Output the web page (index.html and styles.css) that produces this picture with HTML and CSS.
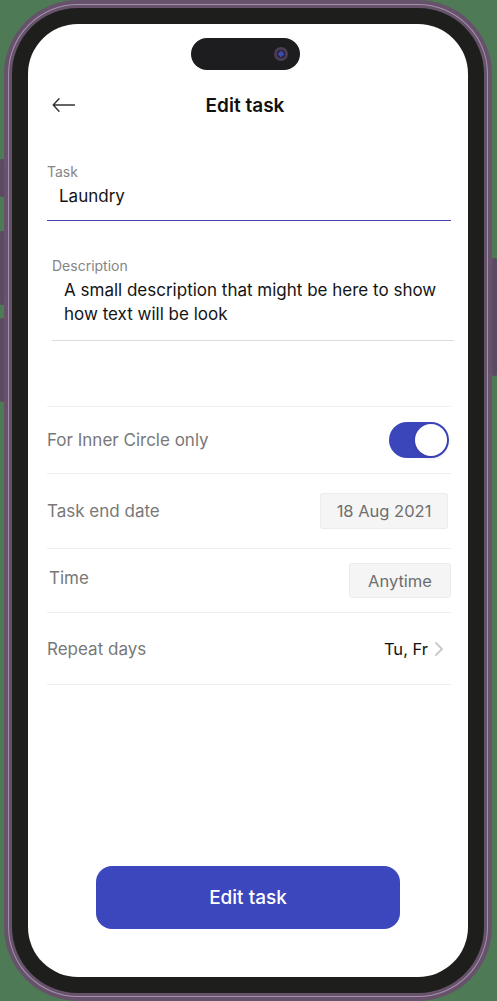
FILE: index.html
```html
<!DOCTYPE html>
<html lang="en">
<head>
<meta charset="utf-8">
<title>Edit task</title>
<link rel="stylesheet" href="styles.css">
</head>
<body>
<div class="device">
  <span class="side-btn side-l1"></span>
  <span class="side-btn side-l2"></span>
  <span class="side-btn side-l3"></span>
  <span class="side-btn side-r1"></span>
  <div class="phone">
    <div class="stripe">
      <div class="rim">
        <div class="bezel">
          <div class="screen">
            <div class="island"><span class="camera"></span></div>

            <header class="header">
              <svg class="back" width="24" height="16" viewBox="0 0 24 16" aria-hidden="true">
                <path d="M22.5 8H1.2M7 1.8L1.2 8 7 14.2" fill="none" stroke="#333333" stroke-width="1.4" stroke-linecap="round" stroke-linejoin="round"/>
              </svg>
              <h1 class="title">Edit task</h1>
            </header>

            <div class="content">
              <div class="field field-task">
                <div class="label">Task</div>
                <div class="value">Laundry</div>
              </div>

              <div class="field field-desc">
                <div class="label">Description</div>
                <div class="value">A small description that might be here to show how text will be look</div>
              </div>

              <div class="rows">
                <div class="row row-circle">
                  <span class="row-label">For Inner Circle only</span>
                  <span class="toggle"><span class="knob"></span></span>
                </div>
                <div class="row row-date">
                  <span class="row-label">Task end date</span>
                  <span class="chip chip-date">18 Aug 2021</span>
                </div>
                <div class="row row-time">
                  <span class="row-label row-label-time">Time</span>
                  <span class="chip chip-time">Anytime</span>
                </div>
                <div class="row row-repeat">
                  <span class="row-label">Repeat days</span>
                  <span class="repeat-value">Tu, Fr
                    <svg class="chev" width="10" height="16" viewBox="0 0 10 16" aria-hidden="true">
                      <path d="M2 2l6 6-6 6" fill="none" stroke="#c9c9c9" stroke-width="1.8" stroke-linecap="round" stroke-linejoin="round"/>
                    </svg>
                  </span>
                </div>
              </div>
            </div>

            <button class="primary">Edit task</button>
          </div>
        </div>
      </div>
    </div>
  </div>
</div>
</body>
</html>
```

FILE: styles.css
```css
* { box-sizing: border-box; }

html, body {
  margin: 0;
  padding: 0;
}

body {
  background: #4e7b55;
  width: 497px;
  height: 1001px;
  overflow: hidden;
  font-family: Inter, "Noto Sans", sans-serif;
}

.device {
  position: relative;
  width: 497px;
  height: 1001px;
  padding-left: 4px;
}

.side-btn {
  position: absolute;
  width: 5px;
  background: #5d4963;
  border-radius: 2px;
}
.side-l1 { left: 0; top: 159px; height: 38px; }
.side-l2 { left: 0; top: 231px; height: 74px; }
.side-l3 { left: 0; top: 318px; height: 84px; }
.side-r1 { right: 0; top: 258px; height: 118px; }

.phone {
  position: relative;
  width: 488px;
  height: 1001px;
  border-radius: 74px;
  background: #66526b;
  padding: 4px;
}

.stripe {
  height: 100%;
  border-radius: 70px;
  background: #a690ab;
  padding: 1px;
}

.rim {
  height: 100%;
  border-radius: 69px;
  background: #66526b;
  padding: 3px;
}

.bezel {
  height: 100%;
  border-radius: 66px;
  background: #1e1e1c;
  padding: 16px;
}

.screen {
  position: relative;
  height: 100%;
  border-radius: 50px;
  background: #ffffff;
  display: flex;
  flex-direction: column;
  overflow: hidden;
}

.island {
  position: absolute;
  left: 163px;
  top: 14px;
  width: 109px;
  height: 32px;
  border-radius: 16px;
  background: #1d1c1e;
}

.camera {
  position: absolute;
  right: 12px;
  top: 9px;
  width: 14px;
  height: 14px;
  border-radius: 50%;
  background: radial-gradient(circle, #3a4aa8 0 2.5px, #262038 3px 4px, #4a3d52 4.5px 7px);
}

.header {
  margin-top: 61px;
  height: 40px;
  display: flex;
  align-items: center;
  justify-content: center;
  position: relative;
}

.back {
  position: absolute;
  left: 24px;
  top: 12px;
}

.title {
  margin: 0;
  font-size: 19px;
  font-weight: 600;
  color: #111111;
  margin-left: -6px;
}

.content {
  padding: 0 17px 0 19px;
}

.field .label {
  font-size: 14px;
  line-height: 18px;
  color: #858585;
}

.field .value {
  font-size: 17px;
  line-height: 24px;
  color: #141414;
}

.field-task {
  margin-top: 38px;
  padding-bottom: 12px;
  border-bottom: 1px solid #3f47b3;
}
.field-task .label { margin-bottom: 3px; }
.field-task .value { padding-left: 12px; }

.field-desc {
  margin-top: 36px;
  margin-left: 5px;
  margin-right: -3px;
  padding-bottom: 14px;
  border-bottom: 1px solid #dcdcdc;
}
.field-desc .label { margin-bottom: 3px; }
.field-desc .value { padding-left: 12px; }

.rows {
  margin-top: 65px;
  border-top: 1px solid #f0f0f0;
}

.row {
  display: flex;
  align-items: center;
  justify-content: space-between;
  border-bottom: 1px solid #eeeeee;
}
.row-circle { height: 67px; }
.row-date { height: 75px; }
.row-time { height: 64px; }
.row-repeat { height: 72px; }

.row-label {
  font-size: 17px;
  color: #787878;
}
.row-label-time {
  margin-left: 2px;
  margin-top: -6px;
}

.toggle {
  position: relative;
  width: 60px;
  height: 36px;
  margin-right: 2px;
  border-radius: 18px;
  background: #3c46bb;
}
.knob {
  position: absolute;
  right: 2px;
  top: 2px;
  width: 32px;
  height: 32px;
  border-radius: 50%;
  background: #ffffff;
  box-shadow: 0 2px 4px rgba(30, 30, 80, 0.18);
}

.chip {
  display: flex;
  align-items: center;
  justify-content: center;
  height: 36px;
  background: #f5f5f5;
  border: 1px solid #ececec;
  border-radius: 3px;
  font-size: 16.5px;
  color: #6e6e6e;
}
.chip-date { width: 128px; margin-right: 3px; }
.chip-time { width: 102px; height: 35px; margin-right: 0; }

.repeat-value {
  display: flex;
  align-items: center;
  gap: 6px;
  font-size: 16.5px;
  font-weight: 400;
  color: #111111;
  margin-right: 7px;
}
.chev { display: block; }

.primary {
  margin: auto auto 48px;
  width: 304px;
  height: 63px;
  border: none;
  border-radius: 16px;
  background: #3d47bd;
  color: #ffffff;
  font-family: Inter, "Noto Sans", sans-serif;
  font-size: 19px;
  font-weight: 500;
}
```
